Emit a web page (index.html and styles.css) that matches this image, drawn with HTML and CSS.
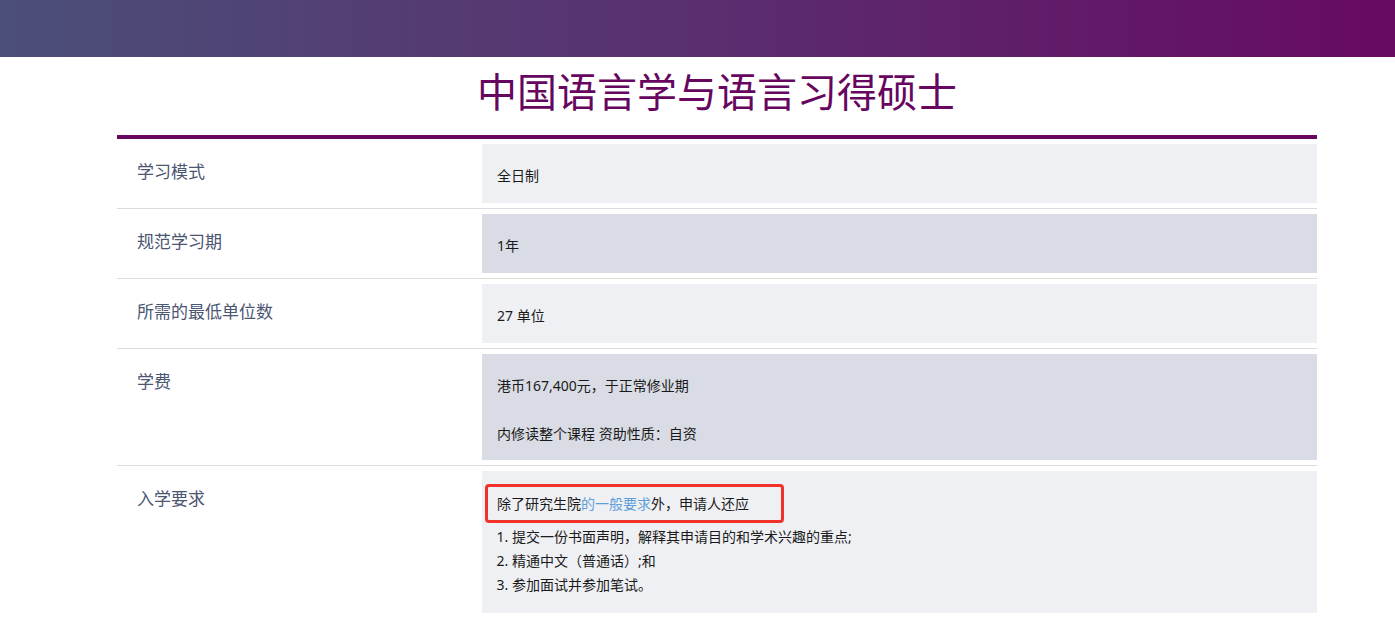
FILE: index.html
```html
<!DOCTYPE html>
<html lang="zh-CN">
<head>
<meta charset="utf-8">
<title>中国语言学与语言习得硕士</title>
<link rel="stylesheet" href="styles.css">
</head>
<body>
<header class="topbar"></header>
<main class="page">
  <h1 class="title">中国语言学与语言习得硕士</h1>
  <section class="facts">
    <div class="row">
      <div class="label">学习模式</div>
      <div class="value value--light"><p>全日制</p></div>
    </div>
    <div class="row">
      <div class="label">规范学习期</div>
      <div class="value value--dark"><p>1年</p></div>
    </div>
    <div class="row">
      <div class="label">所需的最低单位数</div>
      <div class="value value--light"><p>27 单位</p></div>
    </div>
    <div class="row">
      <div class="label">学费</div>
      <div class="value value--dark value--two">
        <p>港币167,400元，于正常修业期</p>
        <p>内修读整个课程 资助性质：自资</p>
      </div>
    </div>
    <div class="row">
      <div class="label">入学要求</div>
      <div class="value value--light value--req">
        <p class="highlight">除了研究生院<a class="link" href="#">的一般要求</a>外，申请人还应</p>
        <ol class="reqs">
          <li>提交一份书面声明，解释其申请目的和学术兴趣的重点;</li>
          <li>精通中文（普通话）;和</li>
          <li>参加面试并参加笔试。</li>
        </ol>
      </div>
    </div>
  </section>
</main>
</body>
</html>
```

FILE: styles.css
```css
* { box-sizing: border-box; }

body {
  margin: 0;
  background: #ffffff;
  font-family: "Noto Sans", "Noto Sans CJK SC", sans-serif;
  color: #222222;
}

.topbar {
  height: 57px;
  background: linear-gradient(90deg, #4b4f79 0%, #5a2f70 50%, #670a61 100%);
}

.page {
  width: 1200px;
  margin: 0 0 0 117px;
}

.title {
  margin: 0;
  padding: 9px 0 21px;
  text-align: center;
  font-family: "Noto Sans CJK SC", sans-serif;
  font-weight: 400;
  font-size: 40px;
  line-height: 48px;
  color: #66065f;
}

.facts {
  border-top: 4px solid #66065f;
}

.row {
  display: grid;
  grid-template-columns: 365px 1fr;
  padding: 5px 0;
  border-bottom: 1px solid #dcdcdc;
}

.row:last-child {
  border-bottom: 0;
}

.label {
  padding: 16px 20px 0;
  font-family: "Noto Sans CJK SC", sans-serif;
  font-size: 17px;
  line-height: 22px;
  color: #4b5672;
}

.value {
  padding: 22px 15px 18px;
  font-size: 14px;
  line-height: 19px;
  color: #1a1a1a;
}

.value--light { background: #eff0f4; }
.value--dark { background: #d9dce4; }

.value p { margin: 0; }

.value--two {
  padding-bottom: 17px;
}

.value--two p + p { margin-top: 29px; }

.value--req {
  padding: 13px 15px 16px;
}

.highlight {
  display: inline-block;
  margin-left: -12px !important;
  padding: 7px 32px 7px 9px;
  border: 3px solid #f0322b;
  border-radius: 4px;
}

.link {
  color: #5f9ed8;
  text-decoration: none;
}

.reqs {
  margin: 2px 0 0;
  padding-left: 15px;
  line-height: 24px;
}
```
